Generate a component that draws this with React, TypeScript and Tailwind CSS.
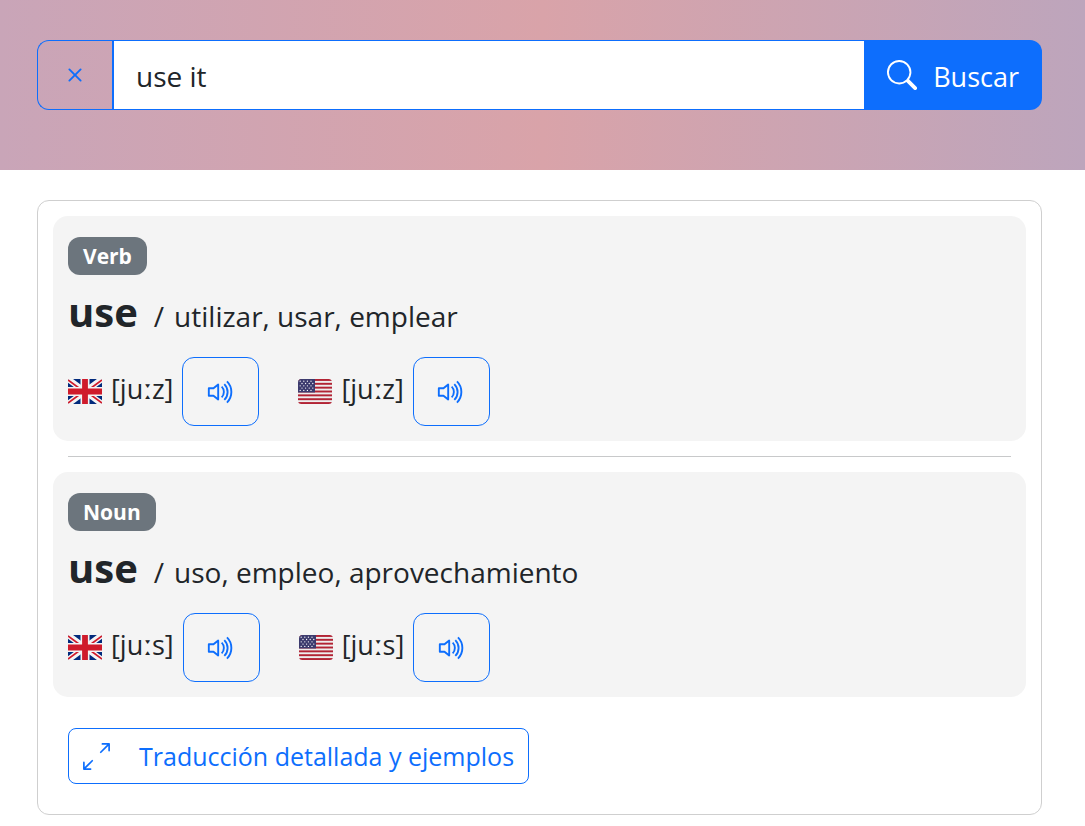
import React from "react";
import { BsArrowsAngleExpand, BsSearch, BsVolumeUp, BsX } from "react-icons/bs";

function FlagGB() {
  return (
    <svg viewBox="0 0 34 25" className="h-[25px] w-[34px] shrink-0" role="img" aria-label="UK">
      <defs>
        <clipPath id="gb"><rect width="34" height="25" rx="1" /></clipPath>
      </defs>
      <g clipPath="url(#gb)">
        <rect width="34" height="25" fill="#012a7c" />
        <path d="M0 0L34 25M34 0L0 25" stroke="#f4f4f4" strokeWidth="6" />
        <path d="M0 1L13 10.5M21 14.5L34 24M34 1L21 10.5M13 14.5L0 24" stroke="#cf1b2b" strokeWidth="1.6" />
        <path d="M17 0V25M0 12.5H34" stroke="#f4f4f4" strokeWidth="9" />
        <path d="M17 0V25M0 12.5H34" stroke="#cf1b2b" strokeWidth="5.8" />
      </g>
    </svg>
  );
}

const stripes = [0, 2, 4, 6, 8, 10, 12];
const starRows = [0, 1, 2, 3, 4];

function FlagUS() {
  return (
    <svg viewBox="0 0 34 25" className="h-[25px] w-[34px] shrink-0" role="img" aria-label="US">
      <defs>
        <clipPath id="us"><rect width="34" height="25" rx="3.5" /></clipPath>
      </defs>
      <g clipPath="url(#us)">
        <rect width="34" height="25" fill="#eeeeee" />
        {stripes.map((i) => (
          <rect key={i} y={(i * 25) / 13} width="34" height={25 / 13} fill="#b22334" />
        ))}
        <rect width="17" height="13.46" fill="#3c3b6e" />
        {starRows.map((r) =>
          [0, 1, 2, 3].map((c) => (
            <circle key={`${r}-${c}`} cx={2.2 + c * 3.6 + (r % 2) * 1.8} cy={2.2 + r * 2.3} r="0.65" fill="#fff" />
          ))
        )}
      </g>
    </svg>
  );
}

function Pronunciation({ flag, ipa, label }: { flag: React.ReactNode; ipa: string; label: string }) {
  return (
    <div className="flex items-center">
      {flag}
      <span className="ml-[9px] mr-[9px] pb-1.5 text-[27px] leading-10">[{ipa}]</span>
      <button
        type="button"
        aria-label={label}
        className="flex h-[69px] w-[77px] items-center justify-center rounded-xl border border-[#0d6efd] text-[#0d6efd]"
      >
        <BsVolumeUp className="size-[30px]" />
      </button>
    </div>
  );
}

function Entry({ kind, word, meaning, ipa }: { kind: string; word: string; meaning: string; ipa: string }) {
  return (
    <article className="rounded-[15px] bg-[#f4f4f4] px-[15px] pb-[15px] pt-[21px]">
      <span className="inline-flex h-[38px] items-center rounded-xl bg-[#6c757d] px-[15px] text-[21px] font-bold leading-none text-white">
        {kind}
      </span>
      <p className="mt-[9px] flex items-baseline leading-[56px]">
        <strong className="text-[40px]">{word}</strong>
        <span className="ml-4 text-[28px]">/</span>
        <span className="ml-2.5 text-[28px]">{meaning}</span>
      </p>
      <div className="mt-[13px] flex gap-[39px]">
        <Pronunciation flag={<FlagGB />} ipa={ipa} label={`${word} UK`} />
        <Pronunciation flag={<FlagUS />} ipa={ipa} label={`${word} US`} />
      </div>
    </article>
  );
}

export default function App() {
  return (
    <div className="min-h-screen bg-white font-['Open_Sans','Noto_Sans',sans-serif] text-[#212529]">
      <header className="bg-[linear-gradient(90deg,#c9a5b8,#d9a3a9_50%,#bda5bc)] pb-[60px] pl-[37px] pr-[43px] pt-10">
        <form className="flex h-[70px]" onSubmit={(e) => e.preventDefault()}>
          <button
            type="reset"
            aria-label="Borrar"
            className="flex w-[75px] items-center justify-center rounded-l-xl border border-r-0 border-[#0d6efd] text-[#0d6efd]"
          >
            <BsX className="size-[30px]" />
          </button>
          <input
            aria-label="Palabra"
            defaultValue="use it"
            className="min-w-0 flex-1 border border-l-2 border-r-0 border-[#0d6efd] bg-white px-[22px] pt-0.5 text-[28px] outline-none"
          />
          <button type="submit" className="flex items-center rounded-r-xl bg-[#0d6efd] px-[23px] text-[27px] text-white">
            <BsSearch className="mr-4 size-[30px]" />
            <span className="pt-1">Buscar</span>
          </button>
        </form>
      </header>
      <main className="pb-[11px] pl-[37px] pr-[43px] pt-[30px]">
        <section className="rounded-xl border border-[#cfcfcf] p-[15px] pb-[30px]">
          <Entry kind="Verb" word="use" meaning="utilizar, usar, emplear" ipa="juːz" />
          <hr className="mx-[15px] my-[15px] border-[#c8c9ca]" />
          <Entry kind="Noun" word="use" meaning="uso, empleo, aprovechamiento" ipa="juːs" />
          <button
            type="button"
            className="ml-[15px] mt-[31px] flex h-14 items-center rounded-lg border border-[#0d6efd] px-[14px] text-[25px] text-[#0d6efd]"
          >
            <BsArrowsAngleExpand className="mr-[29px] size-[27px]" />
            <span className="pt-0.5">Traducción detallada y ejemplos</span>
          </button>
        </section>
      </main>
    </div>
  );
}
